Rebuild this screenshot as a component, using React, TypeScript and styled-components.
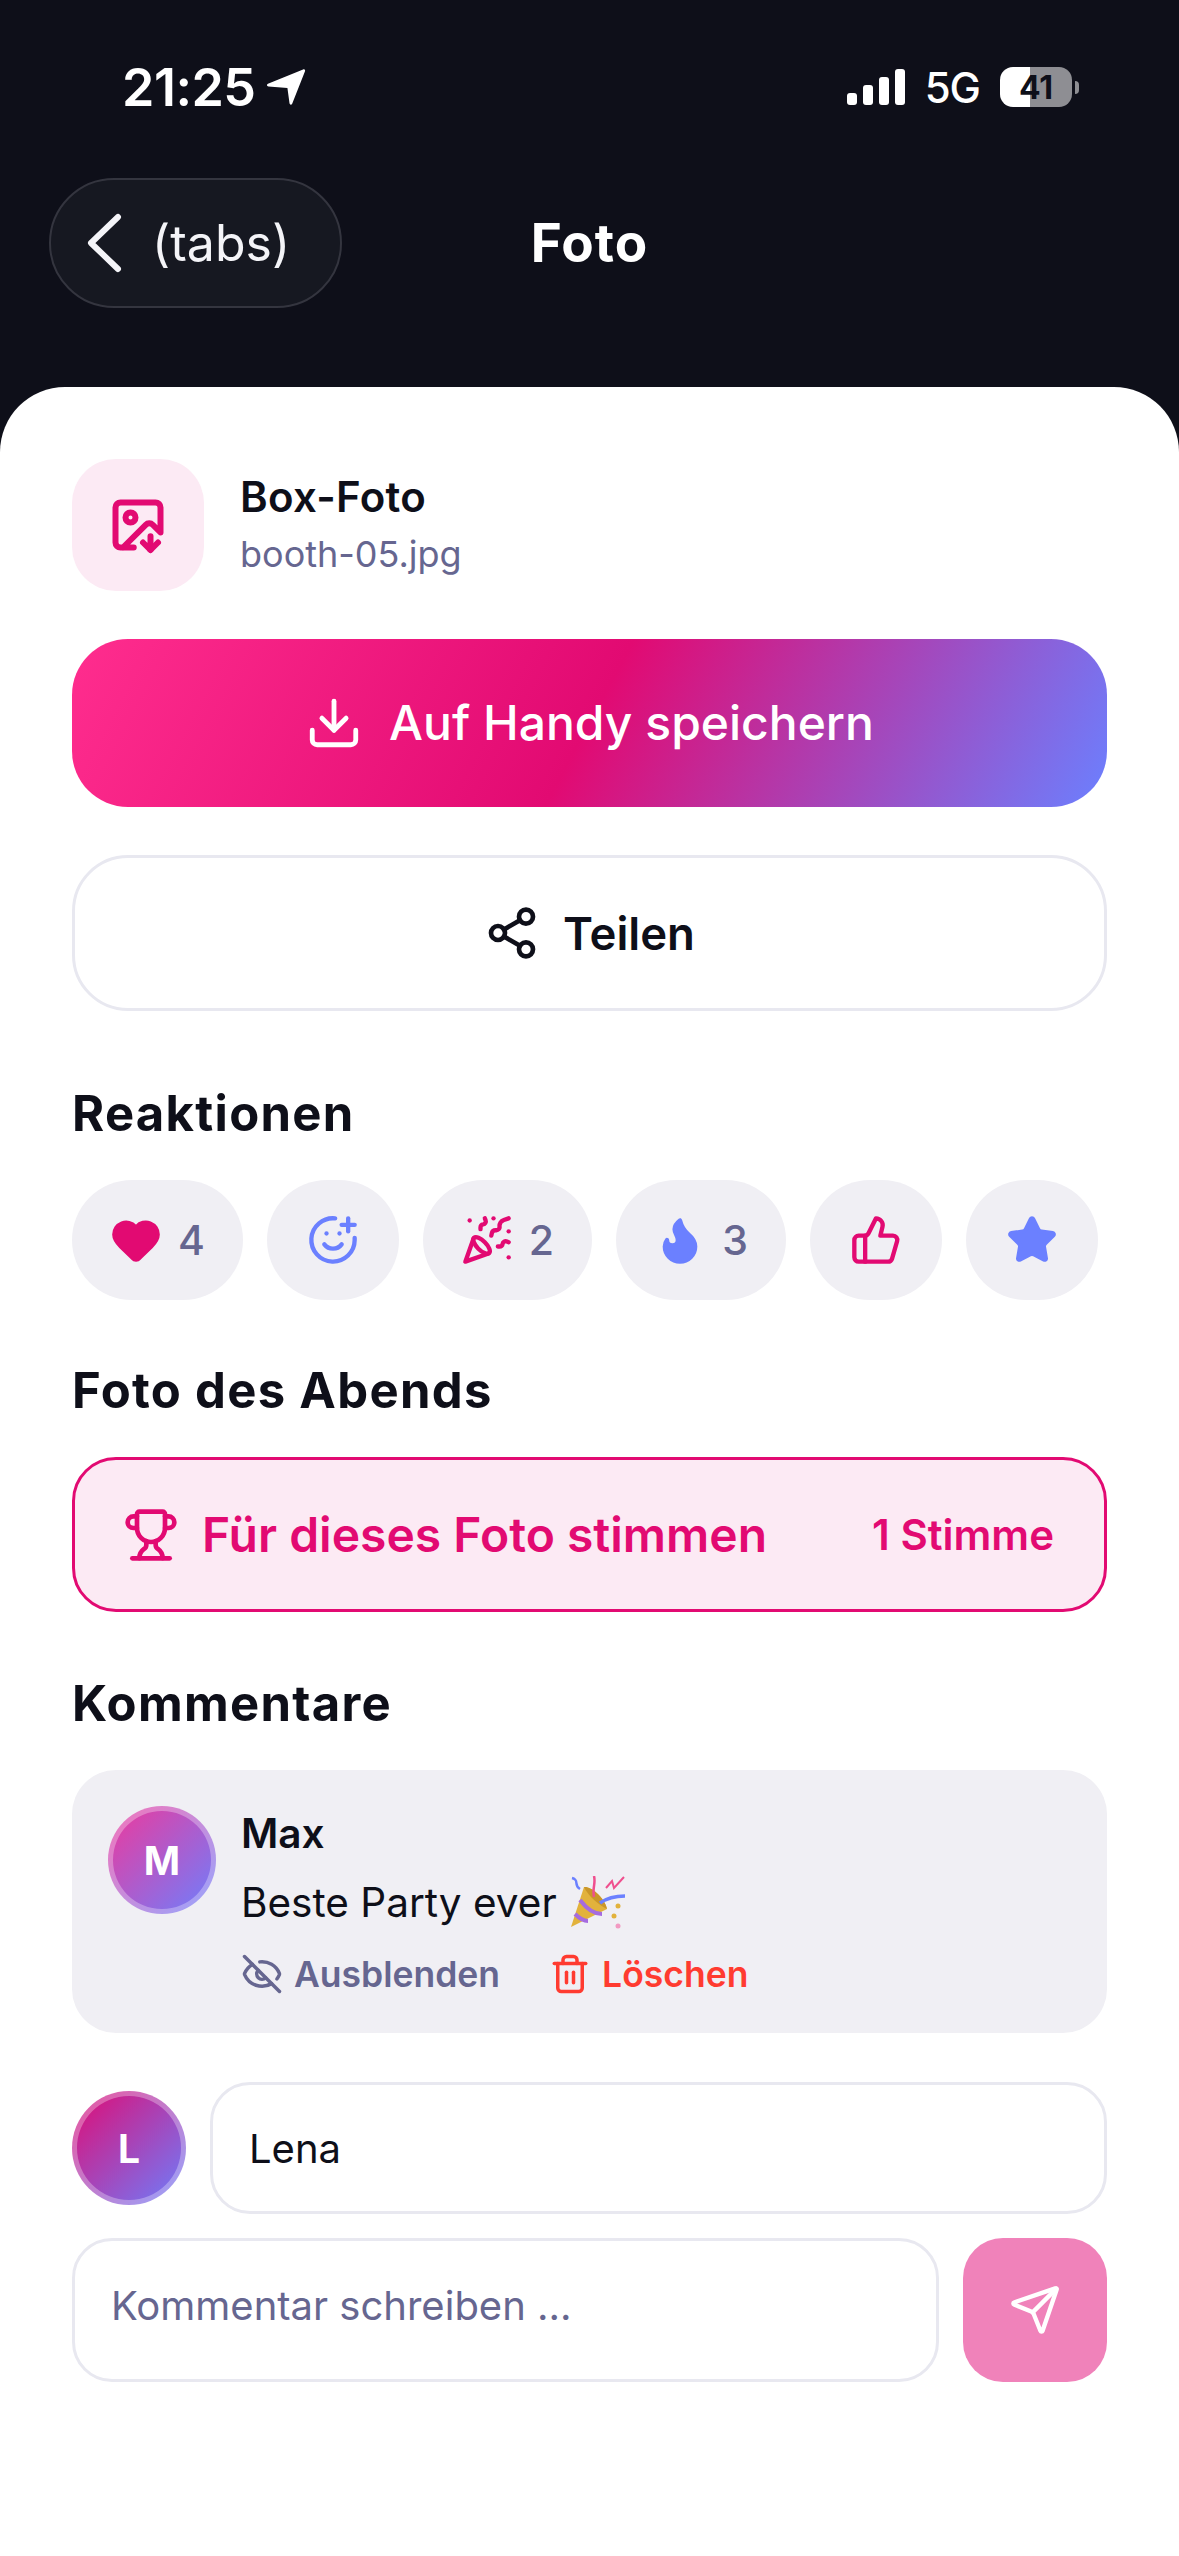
import React from 'react';
import styled, { createGlobalStyle } from 'styled-components';
import {
  Download,
  EyeOff,
  Flame,
  Heart,
  ImageDown,
  PartyPopper,
  Send,
  Share2,
  SmilePlus,
  Star,
  ThumbsUp,
  Trash2,
  Trophy,
} from 'lucide-react';

const INK = '#0e0f19';
const MUTED = '#666690';
const PINK = '#e20a72';
const BLUE = '#6b80ff';
const LINE = '#e8e8f0';

const GlobalStyle = createGlobalStyle`
  html, body {
    margin: 0;
    padding: 0;
    background: #fff;
  }
  * {
    box-sizing: border-box;
  }
  body {
    font-family: Inter, "Liberation Sans", sans-serif;
    color: ${INK};
  }
`;

const Screen = styled.div`
  width: 1179px;
  height: 2556px;
  display: flex;
  flex-direction: column;
  background: ${INK};
  overflow: hidden;
`;

const Header = styled.header`
  height: 387px;
  flex-shrink: 0;
`;

const StatusBar = styled.div`
  display: flex;
  justify-content: space-between;
  align-items: center;
  height: 50px;
  margin-top: 62px;
  padding: 0 107px 0 122px;
  color: #fff;
`;

const StatusGroup = styled.div<{ $gap: number }>`
  display: flex;
  align-items: center;
  gap: ${(p) => p.$gap}px;
`;

const Time = styled.span`
  font-size: 52px;
  font-weight: 600;
  letter-spacing: -0.5px;
`;

const NetworkLabel = styled.span`
  font-size: 42px;
  font-weight: 500;
  letter-spacing: -1px;
`;

const Battery = styled.div`
  width: 72px;
  height: 40px;
  border-radius: 13px;
  background: linear-gradient(90deg, #fff 41%, #8e8e93 41%);
  color: ${INK};
  font-size: 32px;
  font-weight: 700;
  display: flex;
  align-items: center;
  justify-content: center;
  position: relative;
  &::after {
    content: '';
    position: absolute;
    right: -7px;
    top: 14px;
    width: 4px;
    height: 13px;
    border-radius: 0 4px 4px 0;
    background: #8e8e93;
  }
`;

const NavRow = styled.div`
  display: grid;
  grid-template-columns: 1fr auto 1fr;
  align-items: center;
  margin-top: 66px;
  padding: 0 49px;
`;

const BackPill = styled.button`
  justify-self: start;
  width: 293px;
  height: 130px;
  padding: 0 0 0 35px;
  display: flex;
  align-items: center;
  gap: 30px;
  border-radius: 65px;
  border: 2px solid #34353f;
  background: #161821;
  color: #f4f4f8;
  font-family: inherit;
  font-size: 50px;
  font-weight: 400;
`;

const NavTitle = styled.h1`
  margin: 0;
  color: #fff;
  font-size: 53px;
  font-weight: 700;
  letter-spacing: 1px;
`;

const Sheet = styled.main`
  flex: 1;
  background: #fff;
  border-radius: 65px 65px 0 0;
  padding: 72px 72px 0;
`;

const FileRow = styled.div`
  display: flex;
  align-items: center;
  gap: 36px;
`;

const FileIcon = styled.div`
  width: 132px;
  height: 132px;
  border-radius: 44px;
  background: #fceaf4;
  color: ${PINK};
  display: flex;
  align-items: center;
  justify-content: center;
`;

const FileName = styled.div`
  font-size: 42px;
  font-weight: 600;
  line-height: 54px;
  letter-spacing: 0.3px;
`;

const FileMeta = styled.div`
  margin-top: 3px;
  font-size: 36px;
  font-weight: 400;
  line-height: 54px;
  color: ${MUTED};
`;

const PrimaryButton = styled.button`
  width: 100%;
  height: 168px;
  margin-top: 48px;
  padding-bottom: 2px;
  border: 0;
  border-radius: 56px;
  background: linear-gradient(118deg, #ff2d8e 0%, ${PINK} 50%, ${BLUE} 100%);
  color: #fff;
  font-family: inherit;
  font-size: 48px;
  font-weight: 500;
  display: flex;
  align-items: center;
  justify-content: center;
  gap: 26px;
`;

const OutlineButton = styled.button`
  width: 100%;
  height: 156px;
  margin-top: 48px;
  border: 3px solid ${LINE};
  border-radius: 56px;
  background: #fff;
  color: ${INK};
  font-family: inherit;
  font-size: 45.5px;
  font-weight: 600;
  display: flex;
  align-items: center;
  justify-content: center;
  gap: 23px;
`;

const SectionTitle = styled.h2<{ $top: number }>`
  margin: ${(p) => p.$top + 2}px 0 36px;
  font-size: 49px;
  font-weight: 700;
  line-height: 60px;
  letter-spacing: 1.3px;
`;

const ChipRow = styled.div`
  display: flex;
  gap: 24px;
`;

const Chip = styled.button<{ $width: number }>`
  width: ${(p) => p.$width}px;
  height: 120px;
  padding: 0;
  border: 0;
  border-radius: 60px;
  background: #f0eff4;
  color: ${MUTED};
  font-family: inherit;
  font-size: 41px;
  font-weight: 500;
  display: flex;
  align-items: center;
  justify-content: center;
  gap: 16px;
`;

const VoteButton = styled.button`
  width: 100%;
  height: 155px;
  padding: 0 50px 0 48px;
  border: 3px solid ${PINK};
  border-radius: 44px;
  background: #fceaf4;
  color: ${PINK};
  font-family: inherit;
  display: flex;
  align-items: center;
  gap: 23px;
`;

const VoteLabel = styled.span`
  flex: 1;
  text-align: left;
  font-size: 48px;
  font-weight: 600;
`;

const VoteCount = styled.span`
  font-size: 42px;
  font-weight: 600;
`;

const CommentCard = styled.article`
  display: flex;
  gap: 25px;
  height: 263px;
  padding: 36px;
  border-radius: 44px;
  background: #f0eff4;
`;

const Avatar = styled.div<{ $size: number; $from: string }>`
  width: ${(p) => p.$size}px;
  height: ${(p) => p.$size}px;
  flex-shrink: 0;
  border-radius: 50%;
  border: 5px solid rgba(255, 255, 255, 0.3);
  background: linear-gradient(135deg, ${(p) => p.$from}, ${BLUE}) border-box;
  color: #fff;
  font-size: 39px;
  font-weight: 700;
  display: flex;
  align-items: center;
  justify-content: center;
`;

const CommentAuthor = styled.div`
  font-size: 40.5px;
  font-weight: 600;
  line-height: 56px;
`;

const CommentText = styled.div`
  margin-top: 6px;
  display: flex;
  align-items: center;
  gap: 13px;
  font-size: 40.5px;
  font-weight: 400;
  line-height: 70px;
`;

const CommentActions = styled.div`
  margin-top: 11px;
  display: flex;
  gap: 49px;
`;

const ActionLink = styled.span<{ $danger?: boolean }>`
  display: flex;
  align-items: center;
  gap: 11px;
  height: 50px;
  color: ${(p) => (p.$danger ? '#ff3b30' : MUTED)};
  font-size: 35.5px;
  font-weight: 600;
`;

const NameRow = styled.div`
  margin-top: 49px;
  display: flex;
  align-items: center;
  gap: 24px;
`;

const Field = styled.div<{ $height: number; $muted?: boolean }>`
  flex: 1;
  height: ${(p) => p.$height}px;
  padding: 0 36px ${(p) => (p.$muted ? 10 : 0)}px;
  border: 3px solid ${LINE};
  border-radius: 40px;
  background: #fff;
  color: ${(p) => (p.$muted ? MUTED : INK)};
  font-size: 40px;
  font-weight: 400;
  display: flex;
  align-items: center;
`;

const ComposeRow = styled.div`
  margin-top: 24px;
  display: flex;
  gap: 24px;
`;

const SendButton = styled.button`
  width: 144px;
  height: 144px;
  padding: 0;
  border: 0;
  border-radius: 40px;
  background: #f082ba;
  color: #fff;
  display: flex;
  align-items: center;
  justify-content: center;
`;

function BackChevron() {
  return (
    <svg width="36" height="60" viewBox="0 0 36 60" fill="none" stroke="#f4f4f8" strokeWidth="6" strokeLinecap="round" strokeLinejoin="round">
      <path d="M32 4 L5 30 L32 56" />
    </svg>
  );
}

function LocationArrow() {
  return (
    <svg width="40" height="38" viewBox="0 0 42 40" fill="#fff">
      <path d="M39 1.5 C40.5 1 41.5 2 41 3.5 L27.5 37.5 C26.8 39.2 25 39 24.7 37.2 L22.5 21 L2.5 19.5 C0.6 19.3 0.4 17.5 2 16.7 Z" />
    </svg>
  );
}

function SignalBars() {
  return (
    <svg width="58" height="36" viewBox="0 0 58 36" fill="#fff">
      <rect x="0" y="24" width="10" height="12" rx="3" />
      <rect x="16" y="16" width="10" height="20" rx="3" />
      <rect x="32" y="8" width="10" height="28" rx="3" />
      <rect x="48" y="0" width="10" height="36" rx="3" />
    </svg>
  );
}

function PartyEmoji() {
  return (
    <svg width="56" height="54" viewBox="0 0 56 54">
      <path d="M1 51 L14 11 C20 10 34 20 37 33 Z" fill="#e2b23c" />
      <path d="M14 11 C20 10 34 20 37 33 C30 30 18 20 14 11 Z" fill="#c9962a" />
      <path d="M10 24 C16 32 24 38 32 38 M5 38 C9 42 13 45 18 45" stroke="#a66be0" strokeWidth="4" fill="none" />
      <path d="M24 0 C26 8 22 12 24 21" stroke="#ef4f8e" strokeWidth="2.5" fill="none" />
      <path d="M30 27 C37 22 45 20 55 20" stroke="#6b80ff" strokeWidth="3.5" fill="none" />
      <path d="M36 12 L42 5 L44 12 L54 1" stroke="#ef4f8e" strokeWidth="2" fill="none" />
      <path d="M2 2 C10 4 3 9 10 13" stroke="#6b80ff" strokeWidth="2.5" fill="none" />
      <circle cx="48" cy="30" r="2.5" fill="#e2b23c" />
      <circle cx="44" cy="40" r="2.5" fill="#e2b23c" />
      <circle cx="48" cy="50" r="2.5" fill="#f29ac2" />
    </svg>
  );
}

const reactions = [
  { key: 'heart', width: 171, count: 4, icon: <Heart size={52} color={PINK} fill={PINK} strokeWidth={2} /> },
  { key: 'smile', width: 132, icon: <SmilePlus size={52} color={BLUE} strokeWidth={2} /> },
  { key: 'party', width: 169, count: 2, icon: <PartyPopper size={52} color={PINK} strokeWidth={2} /> },
  { key: 'flame', width: 170, count: 3, icon: <Flame size={52} color={BLUE} fill={BLUE} strokeWidth={2} /> },
  { key: 'thumb', width: 132, icon: <ThumbsUp size={52} color={PINK} strokeWidth={2} /> },
  { key: 'star', width: 132, icon: <Star size={52} color={BLUE} fill={BLUE} strokeWidth={2} /> },
];

export default function App() {
  return (
    <Screen>
      <GlobalStyle />
      <Header>
        <StatusBar>
          <StatusGroup $gap={10}>
            <Time>21:25</Time>
            <LocationArrow />
          </StatusGroup>
          <StatusGroup $gap={20}>
            <SignalBars />
            <NetworkLabel>5G</NetworkLabel>
            <Battery>41</Battery>
          </StatusGroup>
        </StatusBar>
        <NavRow>
          <BackPill>
            <BackChevron />
            (tabs)
          </BackPill>
          <NavTitle>Foto</NavTitle>
        </NavRow>
      </Header>
      <Sheet>
        <FileRow>
          <FileIcon>
            <ImageDown size={60} strokeWidth={2.4} />
          </FileIcon>
          <div>
            <FileName>Box-Foto</FileName>
            <FileMeta>booth-05.jpg</FileMeta>
          </div>
        </FileRow>
        <PrimaryButton>
          <Download size={58} strokeWidth={2} />
          Auf Handy speichern
        </PrimaryButton>
        <OutlineButton>
          <Share2 size={56} strokeWidth={2} />
          Teilen
        </OutlineButton>

        <SectionTitle $top={71}>Reaktionen</SectionTitle>
        <ChipRow>
          {reactions.map(({ key, width, count, icon }) => (
            <Chip key={key} $width={width}>
              {icon}
              {count}
            </Chip>
          ))}
        </ChipRow>

        <SectionTitle $top={59}>Foto des Abends</SectionTitle>
        <VoteButton>
          <Trophy size={56} strokeWidth={2} />
          <VoteLabel>Für dieses Foto stimmen</VoteLabel>
          <VoteCount>1 Stimme</VoteCount>
        </VoteButton>

        <SectionTitle $top={60}>Kommentare</SectionTitle>
        <CommentCard>
          <Avatar $size={108} $from="#f0389a">M</Avatar>
          <div>
            <CommentAuthor>Max</CommentAuthor>
            <CommentText>
              Beste Party ever
              <PartyEmoji />
            </CommentText>
            <CommentActions>
              <ActionLink>
                <EyeOff size={42} strokeWidth={2} />
                Ausblenden
              </ActionLink>
              <ActionLink $danger>
                <Trash2 size={42} strokeWidth={2} />
                Löschen
              </ActionLink>
            </CommentActions>
          </div>
        </CommentCard>

        <NameRow>
          <Avatar $size={114} $from={PINK}>L</Avatar>
          <Field $height={132}>Lena</Field>
        </NameRow>
        <ComposeRow>
          <Field $height={144} $muted>Kommentar schreiben ...</Field>
          <SendButton>
            <Send size={52} strokeWidth={2} />
          </SendButton>
        </ComposeRow>
      </Sheet>
    </Screen>
  );
}
